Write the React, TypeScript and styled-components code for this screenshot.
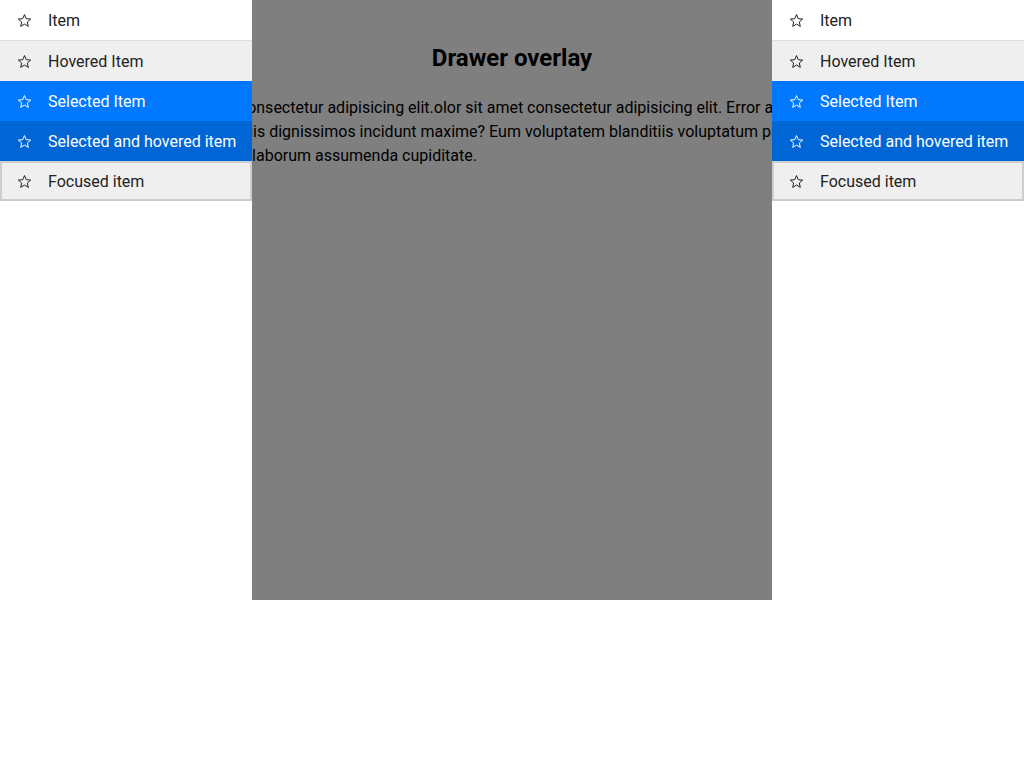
import * as React from 'react';
import styled, { createGlobalStyle, css } from 'styled-components';

const GlobalStyle = createGlobalStyle`
  html, body {
    margin: 0;
    padding: 0;
    background: #fff;
    font-family: Roboto, "Liberation Sans", Arial, sans-serif;
  }
`;

const drawerWidth = 252;

const Stage = styled.main`
  position: relative;
  height: 600px;
  overflow: hidden;
`;

const Content = styled.div`
  padding: 20px 0 0 0;
  color: #000;
`;

const Title = styled.h2`
  margin: 24px 0 24px;
  text-align: center;
  font-size: 24px;
  font-weight: 700;
  line-height: 28px;
`;

const Para = styled.p`
  margin: 0;
  padding-left: 39px;
  font-size: 16px;
  line-height: 24px;
  white-space: nowrap;
`;

const Overlay = styled.div`
  position: absolute;
  inset: 0;
  background: rgba(0, 0, 0, 0.5);
  pointer-events: none;
`;

const OverlayText = styled(Content)`
  position: absolute;
  inset: 0;
`;

const Drawer = styled.nav<{ side: 'left' | 'right' }>`
  position: fixed;
  top: 0;
  bottom: 0;
  width: ${drawerWidth}px;
  background: #fff;
  ${p => (p.side === 'left' ? css`left: 0;` : css`right: 0;`)}
`;

const List = styled.ul`
  list-style: none;
  margin: 0;
  padding: 0;
`;

type ItemState = 'plain' | 'hovered' | 'selected' | 'selectedHover' | 'focused';

const itemColors: Record<ItemState, { bg: string; fg: string }> = {
  plain: { bg: '#fff', fg: '#222' },
  hovered: { bg: '#efefef', fg: '#222' },
  selected: { bg: '#0078ff', fg: '#fff' },
  selectedHover: { bg: '#0066d6', fg: '#fff' },
  focused: { bg: '#efefef', fg: '#222' },
};

const Item = styled.li<{ state: ItemState }>`
  display: flex;
  align-items: center;
  height: 40px;
  box-sizing: border-box;
  padding: 0 0 0 16px;
  gap: 16px;
  font-size: 16px;
  white-space: nowrap;
  background: ${p => itemColors[p.state].bg};
  color: ${p => itemColors[p.state].fg};
  ${p => p.state === 'plain' && css`height: 41px; border-bottom: 1px solid #e0e0e0;`}
  ${p => p.state === 'focused' && css`border: 2px solid #cdcdcd; padding-left: 14px;`}
`;

const IconBox = styled.span`
  display: inline-flex;
  width: 16px;
  height: 16px;
  align-items: center;
  justify-content: center;
  flex: none;
`;

function StarIcon() {
  return (
    <IconBox>
      <svg width="15" height="15" viewBox="0 0 24 24" fill="none" stroke="currentColor" strokeWidth="1.6" strokeLinejoin="miter">
        <polygon points="12,2.5 14.8,9.1 21.9,9.7 16.5,14.4 18.1,21.4 12,17.7 5.9,21.4 7.5,14.4 2.1,9.7 9.2,9.1" />
      </svg>
    </IconBox>
  );
}

const items: { label: string; state: ItemState }[] = [
  { label: 'Item', state: 'plain' },
  { label: 'Hovered Item', state: 'hovered' },
  { label: 'Selected Item', state: 'selected' },
  { label: 'Selected and hovered item', state: 'selectedHover' },
  { label: 'Focused item', state: 'focused' },
];

function Menu({ side }: { side: 'left' | 'right' }) {
  return (
    <Drawer side={side}>
      <List>
        {items.map(it => (
          <Item key={it.label} state={it.state}>
            <StarIcon />
            {it.label}
          </Item>
        ))}
      </List>
    </Drawer>
  );
}

export default function App() {
  return (
    <>
      <GlobalStyle />
      <Stage>
        <Overlay />
        <OverlayText>
          <Title>Drawer overlay</Title>
          <Para>
            Lorem ipsum dolor sit amet consectetur adipisicing elit.olor sit amet consectetur adipisicing elit. Error at quidem quaerat.
            <br />
            Nemo quo doloribus sunt facilis dignissimos incidunt maxime? Eum voluptatem blanditiis voluptatum provident,
            <br />
            odit, fugiat, eaque neque sunt laborum assumenda cupiditate.
          </Para>
        </OverlayText>
      </Stage>
      <Menu side="left" />
      <Menu side="right" />
    </>
  );
}
